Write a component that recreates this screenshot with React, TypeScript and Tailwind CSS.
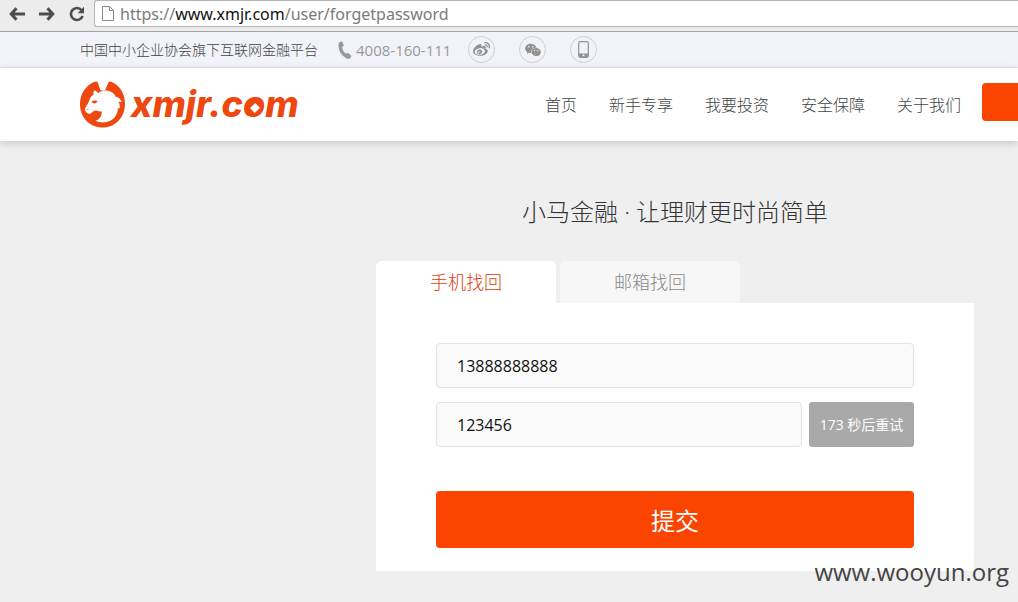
import type { ReactNode } from "react";
import { FaWeibo } from "react-icons/fa";
import { AiFillWechat } from "react-icons/ai";

const navItems = ["首页", "新手专享", "我要投资", "安全保障", "关于我们"];

function BrowserBar() {
  return (
    <div className="flex h-8 items-start border-b border-[#a3a3a3] bg-[#ececec]">
      <div className="flex h-[27px] w-[94px] shrink-0 items-center gap-[14px] pl-[9px] text-[#4d4d4d]">
        <button type="button" aria-label="后退">
          <svg width="16" height="14" viewBox="0 0 16 14" fill="none" stroke="currentColor" strokeWidth="3">
            <path d="M7.5 1.2 2.2 7l5.3 5.8M2.5 7H16" />
          </svg>
        </button>
        <button type="button" aria-label="前进">
          <svg width="16" height="14" viewBox="0 0 16 14" fill="none" stroke="currentColor" strokeWidth="3">
            <path d="M8.5 1.2 13.8 7l-5.3 5.8M13.5 7H0" />
          </svg>
        </button>
        <button type="button" aria-label="刷新">
          <svg width="16" height="16" viewBox="0 0 16 16" fill="none">
            <path d="M12.6 4.2A6 6 0 1 0 13.6 10" stroke="currentColor" strokeWidth="2.6" />
            <path d="M15 .8v6.4H8.6z" fill="currentColor" />
          </svg>
        </button>
      </div>
      <div className="flex h-[27px] flex-1 items-center gap-[6px] rounded-l-[3px] border border-r-0 border-[#b5b5b5] bg-white pl-[7px]">
        <svg width="12" height="15" viewBox="0 0 12 15" fill="#fdfdfd" stroke="#8a8a8a">
          <path d="M.5.5h7l4 4v10H.5zM7.5.5v4h4" />
        </svg>
        <p className="font-['Noto_Sans'] text-base leading-6 whitespace-nowrap text-[#7b7b7b]">
          https://<span className="text-[#111]">www.xmjr.com</span>/user/forgetpassword
        </p>
      </div>
    </div>
  );
}

function RoundLink({ label, children }: { label: string; children: ReactNode }) {
  return (
    <a
      href="#"
      aria-label={label}
      className="flex size-[27px] items-center justify-center rounded-full border border-[#cfcfd2] text-[#929292]"
    >
      {children}
    </a>
  );
}

function TopBar() {
  return (
    <div className="flex h-9 items-center border-b border-[#e6e8ee] bg-[#f2f3f8] pl-20">
      <p className="text-sm leading-5 font-light text-[#444]">中国中小企业协会旗下互联网金融平台</p>
      <p className="ml-5 flex items-center gap-1 text-[15px] leading-5 text-[#999]">
        <svg width="14" height="18" viewBox="0 0 14 18" fill="currentColor">
          <path d="M1.800 1 3.900.2 6 4.600 4.200 5.800c.1 2.800 1.500 5.300 3.700 6.900l2-1L13.500 15l-1 2c-.9.900-2.600 1-4.200.2C3.200 14.500.5 9.500.5 4.500.5 2.900.9 1.600 1.800 1z" />
        </svg>
        4008-160-111
      </p>
      <div className="ml-[17px] flex gap-6">
        <RoundLink label="微博">
          <FaWeibo size={17} />
        </RoundLink>
        <RoundLink label="微信">
          <AiFillWechat size={18} />
        </RoundLink>
        <RoundLink label="手机客户端">
          <svg width="11" height="17" viewBox="0 0 11 17">
            <rect x="0.700" y="0.700" width="9.600" height="15.600" rx="1.500" fill="none" stroke="currentColor" strokeWidth="1.200" />
            <path d="M1 12.500h9v3.500H1z" fill="currentColor" />
            <circle cx="5.500" cy="14.300" r="1" fill="#f2f3f8" />
          </svg>
        </RoundLink>
      </div>
    </div>
  );
}

function Logo() {
  return (
    <a href="#" className="mb-[2px] flex items-center gap-[6px] text-[#ee4710]">
      <svg width="45" height="48" viewBox="0 0 45 48">
        <path
          d="M13.500 2.200C15.800 1 17.300 1.200 18 3L20.500 10.500H25L28.200 3C29 1.200 30.500 1 32.300 2.200 40 6 45 13.500 45 23.500 45 37.500 35.500 47.500 22.500 47.500 9.500 47.500 0 37.500 0 24 0 14 5.500 6 13.500 2.200z"
          fill="currentColor"
        />
        <path
          d="M14.300 10.500C16 10.800 17.500 11.800 18.300 13.200 21 10.800 25 10 28.500 10.900 32 11.800 34.500 13.700 35.800 16.700 38.500 17.200 41 19 41.800 22.300 40.500 21.500 39.300 21.500 38.400 22 40 24 40.300 26.500 39 29.300 38.800 28.500 38.400 28 37.800 27.700 38.300 34.500 33.500 40.500 26.500 42 22.500 42.800 18.700 42.300 15.500 40.800 19.500 39.500 21.800 36.500 21.800 31.500 19.800 31.700 18 31.200 16.300 30.500 14.500 30.500 13 31.200 12 32.500 10.800 34 8.500 34.200 6.800 32.800 5 31.300 4.500 29.300 5.500 27.500 7.500 24.500 8.800 22.500 9.500 19.800 10.200 17.500 11.500 16 13.500 14.500 13.200 13 13.500 11.500 14.300 10.500z"
          fill="#fff"
        />
        <path d="M11.300 21.800C13.200 20.400 15.300 20.300 17.500 21.200 16.500 23.300 14.300 24 12.500 22.800zM7 29.300C7.500 28.700 8.200 28.500 8.800 28.800L7.600 30.200z" fill="currentColor" />
      </svg>
      <span className="font-[Inter] text-4xl leading-[46px] font-extrabold italic">
        xmjr.c
        <span className="relative">
          o
          <svg className="absolute top-[18px] left-[4px]" width="16" height="16" viewBox="0 0 16 16">
            <circle cx="8" cy="8" r="7.500" fill="currentColor" />
            <path d="M8.300 3 13 8l-5.300 5L3 8z" fill="#fff" />
          </svg>
        </span>
        m
      </span>
    </a>
  );
}

function Header() {
  return (
    <header className="relative flex h-[73px] items-center bg-white pl-20 shadow-[0_2px_8px_rgba(0,0,0,0.18)]">
      <Logo />
      <nav className="ml-auto flex gap-8 pr-[21px] text-base leading-6 font-light whitespace-nowrap text-[#444]">
        {navItems.map((item) => (
          <a key={item} href="#">
            {item}
          </a>
        ))}
      </nav>
      <a href="#" aria-label="登录" className="mb-[6px] h-[38px] w-9 rounded-l bg-[#fa4400]" />
    </header>
  );
}

function RecoverForm() {
  return (
    <main className="flex justify-end pt-[53px] pr-11 pb-[31px]">
      <div className="w-full max-w-[598px]">
        <h1 className="text-center text-2xl leading-9 font-light text-[#333]">小马金融 · 让理财更时尚简单</h1>
        <div className="mt-[31px] flex gap-1 text-lg leading-6 font-light">
          <button type="button" className="h-[42px] w-[180px] rounded-t-md bg-white text-[#dc3d0c]">
            手机找回
          </button>
          <button type="button" className="h-[42px] w-[180px] rounded-t-md bg-[#f7f7f7] text-[#888]">
            邮箱找回
          </button>
        </div>
        <form className="bg-white px-[60px] pt-10 pb-[23px]" onSubmit={(e) => e.preventDefault()}>
          <input
            aria-label="手机号"
            type="tel"
            defaultValue="13888888888"
            className="block h-[45px] w-full rounded border border-[#e2e2e2] bg-[#fafafa] px-5 text-base text-[#111]"
          />
          <div className="mt-[14px] flex gap-[7px]">
            <input
              aria-label="验证码"
              type="text"
              defaultValue="123456"
              className="h-[45px] min-w-0 flex-1 rounded border border-[#e2e2e2] bg-[#fafafa] px-5 text-base text-[#111]"
            />
            <button type="button" className="w-[105px] rounded-[3px] bg-[#a9a9a9] text-sm whitespace-nowrap text-white">
              173 秒后重试
            </button>
          </div>
          <button type="submit" className="mt-11 h-[57px] w-full rounded bg-[#fa4400] pt-[2px] text-2xl leading-8 text-white">
            提交
          </button>
        </form>
      </div>
    </main>
  );
}

export default function App() {
  return (
    <div className="relative min-h-screen overflow-hidden bg-[#efefef] font-['Open_Sans','Noto_Sans_CJK_SC',sans-serif]">
      <BrowserBar />
      <TopBar />
      <Header />
      <RecoverForm />
      <p className="absolute right-[9px] bottom-[14px] text-2xl leading-8 text-[#444]">www.wooyun.org</p>
    </div>
  );
}
